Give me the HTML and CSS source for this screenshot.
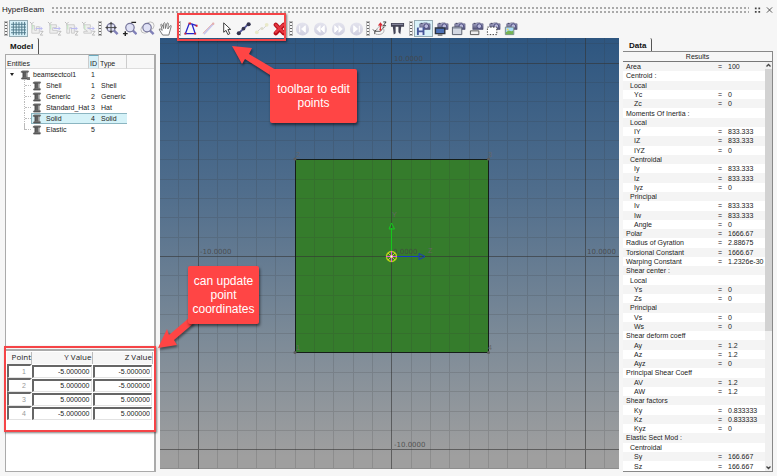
FILE: index.html
```
<!DOCTYPE html>
<html lang="en">
<head>
<meta charset="utf-8">
<meta name="viewport" content="width=device-width, initial-scale=1">
<title>HyperBeam</title>
<link rel="stylesheet" href="styles.css">
</head>
<body>
<svg class="defs" aria-hidden="true">
  <defs>
    <linearGradient id="ball" x1="0" y1="0" x2="0" y2="1"><stop offset="0" stop-color="#e4e4ee"/><stop offset="1" stop-color="#cfcfdf"/></linearGradient>
    <linearGradient id="metal" x1="0" y1="0" x2="0" y2="1"><stop offset="0" stop-color="#b4b4d4"/><stop offset="1" stop-color="#4c4c70"/></linearGradient>
    <symbol id="beam" viewBox="0 0 12 12"><path d="M1 1.5 3 .5h7l1 1.5-2 1v5l2 1.5-1.500 1.500H2L1 10l2-1.500V3.500z" fill="#777"/><path d="M4 3v6M6 3v6" stroke="#444" stroke-width="1"/><path d="M1 2.500h9M2 10.500h8" stroke="#444"/><path d="M8 3v5" stroke="#aaa"/></symbol>
    <symbol id="camera" viewBox="0 0 16 16"><path d="M4 3h3l1-1h4l1 1h2v6H4z" fill="url(#metal)" stroke="#4b4b70" stroke-width=".6"/><circle cx="11" cy="5.500" r="2.500" fill="#b9b9dc" stroke="#47477a"/><path d="M5 2.500h2" stroke="#39395a"/></symbol>
    <symbol id="lens" viewBox="0 0 16 16"><path d="m10.500 10 4 4" stroke="#8080b8" stroke-width="2.500"/><circle cx="7.500" cy="7" r="4.500" fill="#dfe1f5" stroke="#77779c" stroke-width="1.300"/></symbol>
  </defs>
</svg>
<header class="titlebar">
  <h1>HyperBeam</h1>
  <span class="dots"></span>
  <button class="win" aria-label="Undock"><svg viewBox="0 0 8 8"><path d="M1 1h2v2H1zM5 1h2v2H5zM1 5h2v2H1zM5 5h2v2H5z" fill="#444"/></svg></button>
  <button class="win" aria-label="Close"><svg viewBox="0 0 8 8"><path d="m1 1 6 6M7 1 1 7" stroke="#444"/></svg></button>
</header>

<nav class="toolbar" aria-label="Tools">
  <span class="grip"></span>
  <div class="group views">
    <button class="on" aria-label="Grid"><svg viewBox="0 0 16 16"><path d="M0 3.500h16M0 6.500h16M0 9.500h16M0 12.500h16M2.500 1v14M5.500 1v14M8.500 1v14M11.500 1v14M14.500 1v14" stroke="#4d7888" stroke-width="1"/></svg></button>
    <button aria-label="Orientation 1"><svg viewBox="0 0 16 16" fill="none"><path d="m1 1 2 2 2-2M3 3v2" stroke="#bbb"/><path d="M3 5v8h8V6H8v4H6V5z" fill="#eee" stroke="#ccc"/><path d="M7 8h7m-2-2 2 2-2 2" stroke="#b7b7f0"/><path d="M4 9V4" stroke="#bde6bd"/><path d="M12 11h3l-3 4h3" stroke="#bbb"/></svg></button>
    <button aria-label="Orientation 2"><svg viewBox="0 0 16 16" fill="none"><path d="m1 1 2 2 2-2M3 3v2" stroke="#bbb"/><path d="M3 4h7v3H6v3h5v3H3z" fill="#eee" stroke="#ccc"/><path d="M7 8h7m-2-2 2 2-2 2" stroke="#b7b7f0"/><path d="M4 9V4" stroke="#bde6bd"/><path d="M12 11h3l-3 4h3" stroke="#bbb"/></svg></button>
    <button aria-label="Orientation 3"><svg viewBox="0 0 16 16" fill="none"><path d="m1 1 2 2 2-2M3 3v2" stroke="#bbb"/><path d="M3 4h8v9H8V7H6v6H3z" fill="#eee" stroke="#ccc"/><path d="M7 8h7m-2-2 2 2-2 2" stroke="#b7b7f0"/><path d="M4 9V4" stroke="#bde6bd"/><path d="M12 11h3l-3 4h3" stroke="#bbb"/></svg></button>
    <button aria-label="Orientation 4"><svg viewBox="0 0 16 16" fill="none"><path d="m1 1 2 2 2-2M3 3v2" stroke="#bbb"/><path d="M3 4h7v3H7l4 3v3H3v-2h4L3 8z" fill="#eee" stroke="#ccc"/><path d="M7 8h7m-2-2 2 2-2 2" stroke="#b7b7f0"/><path d="M4 9V4" stroke="#bde6bd"/><path d="M12 11h3l-3 4h3" stroke="#bbb"/></svg></button>
  </div>
  <span class="grip"></span>
  <div class="group zooms">
    <button aria-label="Fit"><svg viewBox="0 0 16 16"><use href="#lens"/><path d="M7.500 1v12M1.500 7h12" stroke="#444" stroke-width="1"/><path d="m7.500 1.500-2 2h4zm0 11-2-2h4zM2 7l2-2v4zm11 0-2-2v4z" fill="#444"/></svg></button>
    <button aria-label="Zoom in or out"><svg viewBox="0 0 16 16"><use href="#lens" x="1"/><path d="M10 1.500h5M1 13.500h5M3.500 11v5" stroke="#222" stroke-width="1.500"/></svg></button>
    <button aria-label="Zoom area"><svg viewBox="0 0 16 16"><circle cx="5" cy="9" r="4" fill="none" stroke="#bbb"/><circle cx="11" cy="5" r="4" fill="none" stroke="#bbb"/><use href="#lens"/></svg></button>
    <button aria-label="Pan"><svg viewBox="0 0 16 16"><path d="M5 15 1.500 9.500q-.5-1.500 1-1L4.500 10 3 4q.5-1.500 1.500 0l1.500 4L6 2.500q.8-1.500 1.600 0L8 8l1.500-5.500q1.200-1.200 1.500.3L10.500 8.500 13 5q1.500-.5 1 1L11.500 15z" fill="#fff" stroke="#666" stroke-width=".9"/></svg></button>
  </div>
  <span class="grip"></span>
  <div class="group edit">
    <button aria-label="Create section"><svg viewBox="0 0 16 16"><path d="M2.500 13.500 6.500 3h3l3.500 10.500zM9 3l5.500 2" fill="none" stroke="#2424cc" stroke-width="1.400"/><path d="M1.500 12.500h2v2h-2zM12 12.500h2v2h-2zM6 1.500h2.500v2H6zM13.500 4h2v2h-2z" fill="#d32430"/></svg></button>
    <button aria-label="Draw line"><svg viewBox="0 0 16 16"><path d="m3 14 10-11" stroke="#c7c7ec" stroke-width="2"/><path d="m2 13 11-11" stroke="#e4b2b2"/><circle cx="13" cy="3" r="1.300" fill="#e4b0b0"/></svg></button>
    <button aria-label="Select"><svg viewBox="0 0 16 16"><path d="M5 2v10l2.500-2 2 4.500 2-1L9.500 9h3z" fill="#fff" stroke="#333" stroke-width="1"/></svg></button>
    <button aria-label="Add point"><svg viewBox="0 0 16 16"><path d="m3 13 10.500-10" stroke="#55579a" stroke-width="2"/><circle cx="3" cy="13" r="2.200" fill="#33344e"/><circle cx="8" cy="8" r="2" fill="#33344e"/><circle cx="13.500" cy="3.500" r="2.200" fill="#33344e"/></svg></button>
    <button aria-label="Merge points"><svg viewBox="0 0 16 16"><path d="m3 12 4-4h3l4-4" fill="none" stroke="#ccc"/><circle cx="3" cy="12" r="2" fill="#e9e9c8"/><circle cx="8.500" cy="8" r="1.700" fill="#dcdccc"/><circle cx="13.500" cy="4" r="2" fill="#e9e9c8"/></svg></button>
    <button aria-label="Delete"><svg viewBox="0 0 16 16"><path d="m4 4 8.500 9M12.500 4 4 13" stroke="#b60d18" stroke-width="4.500" stroke-linecap="round"/><path d="m4 4 8 8M12 4 4 12" stroke="#e53640" stroke-width="2.500" stroke-linecap="round"/></svg></button>
  </div>
  <span class="grip"></span>
  <div class="group steps">
    <button aria-label="First"><svg viewBox="0 0 16 16"><circle cx="8" cy="8.500" r="7" fill="url(#ball)"/><path d="M5 5v7M11 5l-4 3.500 4 3.500z" fill="#fff" stroke="#fff"/></svg></button>
    <button aria-label="Previous"><svg viewBox="0 0 16 16"><circle cx="8" cy="8.500" r="7" fill="url(#ball)"/><path d="M7.500 5 4 8.500 7.500 12zM12 5 8.500 8.500 12 12z" fill="#fff" stroke="#fff"/></svg></button>
    <button aria-label="Next"><svg viewBox="0 0 16 16"><circle cx="8" cy="8.500" r="7" fill="url(#ball)"/><path d="M4 5l3.500 3.500L4 12zM8.500 5 12 8.500 8.500 12z" fill="#fff" stroke="#fff"/></svg></button>
    <button aria-label="Last"><svg viewBox="0 0 16 16"><circle cx="8" cy="8.500" r="7" fill="url(#ball)"/><path d="M11 5v7M5 5l4 3.500L5 12z" fill="#fff" stroke="#fff"/></svg></button>
  </div>
  <span class="grip"></span>
  <div class="group measure">
    <button aria-label="Local axes"><svg viewBox="0 0 16 16" fill="none"><path d="m1 9 2 2 2-2M3 11v3M12 1h3l-3 4h3" stroke="#333"/><path d="M3 11h6l4-5" stroke="#555"/><path d="M4 14c8 2 11-4 7-7M5 10c0-4 6-6 9-3" stroke="#aaa"/><path d="M9 10V3M7 5l2-2.500L11 5" stroke="#d62b35" stroke-width="1.300"/><circle cx="9" cy="9" r="1" fill="#d22"/></svg></button>
    <button aria-label="Calipers"><svg viewBox="0 0 16 16"><path d="M1 2h14v4h-3l-1 8-2-2V6H6v7l-2 1.500L3 6H1z" fill="#444456"/><path d="M2 3.500h12" stroke="#999ab0"/></svg></button>
  </div>
  <span class="grip"></span>
  <div class="group capture">
    <button class="on" aria-label="Save image to file"><svg viewBox="0 0 16 16"><use href="#camera"/><path d="M1 7h8v8H1z" fill="#45579a"/><path d="M3 7h4v3H3zM3 12h4v3H3z" fill="#e8edff"/></svg></button>
    <button aria-label="Capture screen"><svg viewBox="0 0 16 16"><use href="#camera"/><path d="M1.500 7.500h10v6h-10z" fill="#4c70b4" stroke="#2d3440" stroke-width="1.500"/><path d="M4 15h5" stroke="#333"/></svg></button>
    <button aria-label="Capture window"><svg viewBox="0 0 16 16"><use href="#camera"/><path d="M1.500 6.500h10v8h-10z" fill="#d3d8e2" stroke="#555c69"/><path d="M2 7.500h9" stroke="#777f95"/></svg></button>
    <button aria-label="Capture panel"><svg viewBox="0 0 16 16"><use href="#camera"/><path d="M1.500 10.500h9v4h-9z" fill="#eee" stroke="#555"/></svg></button>
    <button aria-label="Capture area"><svg viewBox="0 0 16 16"><use href="#camera"/><path d="M1.500 6.500h10v8h-10z" fill="#fff" stroke="#333" stroke-dasharray="1.500 1.500"/></svg></button>
    <button aria-label="Capture graphics"><svg viewBox="0 0 16 16"><use href="#camera"/><path d="M2.500 6.500h9v8h-9z" fill="#a9dcfa" stroke="#788" /><path d="m3 12 3-2 3 1 2-1v4H3z" fill="#76b453"/><circle cx="5" cy="9" r="1" fill="#f5dc52"/></svg></button>
  </div>
</nav>

<main class="workspace">
  <section class="side">
    <div class="tab model">Model</div>
    <div class="panel tree">
      <table>
        <colgroup><col class="c-name"><col class="c-id"><col class="c-type"><col></colgroup>
        <thead><tr><th>Entities</th><th class="sorted">ID</th><th>Type</th><th></th></tr></thead>
        <tbody>
          <tr><td><div class="node root"><span class="caret"></span><svg><use href="#beam"/><circle cx="9" cy="9" r="2" fill="#777"/></svg><span class="label">beamsectcol1</span></div></td><td>1</td><td></td><td></td></tr>
          <tr><td><div class="node"><svg><use href="#beam"/></svg><span class="label">Shell</span></div></td><td>1</td><td>Shell</td><td></td></tr>
          <tr><td><div class="node"><svg><use href="#beam"/></svg><span class="label">Generic</span></div></td><td>2</td><td>Generic</td><td></td></tr>
          <tr><td><div class="node"><svg><use href="#beam"/></svg><span class="label">Standard_Hat</span></div></td><td>3</td><td>Hat</td><td></td></tr>
          <tr class="selected"><td><div class="node"><svg><use href="#beam"/></svg><span class="label">Solid</span></div></td><td>4</td><td>Solid</td><td></td></tr>
          <tr><td><div class="node last"><svg><use href="#beam"/></svg><span class="label">Elastic</span></div></td><td>5</td><td></td><td></td></tr>
        </tbody>
      </table>
    </div>
    <div class="panel points">
      <table>
        <colgroup><col class="c-point"><col><col></colgroup>
        <thead><tr><th>Point</th><th>Y Value</th><th>Z Value</th></tr></thead>
        <tbody>
          <tr><td class="num">1</td><td><input aria-label="Point 1 Y" value="-5.000000"></td><td><input aria-label="Point 1 Z" value="-5.000000"></td></tr>
          <tr><td class="num">2</td><td><input aria-label="Point 2 Y" value="5.000000"></td><td><input aria-label="Point 2 Z" value="-5.000000"></td></tr>
          <tr><td class="num">3</td><td><input aria-label="Point 3 Y" value="5.000000"></td><td><input aria-label="Point 3 Z" value="5.000000"></td></tr>
          <tr><td class="num">4</td><td><input aria-label="Point 4 Y" value="-5.000000"></td><td><input aria-label="Point 4 Z" value="5.000000"></td></tr>
        </tbody>
      </table>
    </div>
  </section>

  <section class="view" aria-label="Section view">
    <svg viewBox="0 0 459 431" preserveAspectRatio="xMidYMid slice">
      <path d="M135 121h193v193H135z" fill="#357c2c"/>
      <path class="minor" d="M18.500 0v431M57.500 0v431M77.500 0v431M96.500 0v431M115.500 0v431M135.500 0v431M154.500 0v431M173.500 0v431M193.500 0v431M212.500 0v431M251.500 0v431M270.500 0v431M289.500 0v431M309.500 0v431M328.500 0v431M347.500 0v431M367.500 0v431M386.500 0v431M405.500 0v431M444.500 0v431M0 5.500h459M0 44.500h459M0 63.500h459M0 83.500h459M0 102.500h459M0 121.500h459M0 141.500h459M0 160.500h459M0 179.500h459M0 199.500h459M0 237.500h459M0 257.500h459M0 276.500h459M0 295.500h459M0 314.500h459M0 334.500h459M0 353.500h459M0 373.500h459M0 392.500h459M0 430.500h459"/>
      <path class="major" d="M38.500 0v431M231.500 0v431M425.500 0v431M0 25.500h459M0 218.500h459M0 411.500h459"/>
      <path d="M135.500 121.500h193v193h-193z" fill="none" stroke="#151d18"/>
      <g fill="#5b5b5b"><circle cx="135" cy="121" r="1.500"/><circle cx="328.500" cy="121" r="1.500"/><circle cx="135" cy="314.500" r="1.500"/><circle cx="328.500" cy="314.500" r="1.500"/></g>
      <g class="axis-text"><text x="234" y="23">10.0000</text><text x="234" y="409">-10.0000</text><text x="40" y="216">-10.0000</text><text x="427" y="216">10.0000</text><text x="233" y="216">0.0000</text></g>
      <g class="point-text"><text x="136" y="119">2</text><text x="328" y="119">3</text><text x="136" y="312">1</text><text x="328" y="312">4</text><text x="232" y="179">Y</text><text x="268" y="215">Z</text></g>
      <path d="M231.500 218V190m-2.500 1 2.500-6 3 6z" fill="none" stroke="#15c81c"/>
      <path d="M232 218.500h27m0-3 6 3-6 3z" fill="none" stroke="#1638c4"/>
      <circle cx="231.500" cy="218.500" r="5" fill="none" stroke="#b8d515" stroke-width="1.300"/>
      <path d="m228 215 7 7m0-7-7 7" stroke="#d4c72f"/><path d="M226 218.500h11M231.500 213v11" stroke="#e05bd4"/><circle cx="231.500" cy="218.500" r="1" fill="#fff"/>
    </svg>
  </section>

  <section class="data">
    <div class="tab">Data</div>
    <div class="results">
      <h2>Results</h2>
      <div class="list">
        <table>
          <tbody>
            <tr><td>Area</td><td>=</td><td>100</td></tr>
            <tr><td>Centroid :</td><td></td><td></td></tr>
            <tr class="l1"><td>Local</td><td></td><td></td></tr>
            <tr class="l2"><td>Yc</td><td>=</td><td>0</td></tr>
            <tr class="l2"><td>Zc</td><td>=</td><td>0</td></tr>
            <tr><td>Moments Of Inertia :</td><td></td><td></td></tr>
            <tr class="l1"><td>Local</td><td></td><td></td></tr>
            <tr class="l2"><td>IY</td><td>=</td><td>833.333</td></tr>
            <tr class="l2"><td>IZ</td><td>=</td><td>833.333</td></tr>
            <tr class="l2"><td>IYZ</td><td>=</td><td>0</td></tr>
            <tr class="l1"><td>Centroidal</td><td></td><td></td></tr>
            <tr class="l2"><td>Iy</td><td>=</td><td>833.333</td></tr>
            <tr class="l2"><td>Iz</td><td>=</td><td>833.333</td></tr>
            <tr class="l2"><td>Iyz</td><td>=</td><td>0</td></tr>
            <tr class="l1"><td>Principal</td><td></td><td></td></tr>
            <tr class="l2"><td>Iv</td><td>=</td><td>833.333</td></tr>
            <tr class="l2"><td>Iw</td><td>=</td><td>833.333</td></tr>
            <tr class="l2"><td>Angle</td><td>=</td><td>0</td></tr>
            <tr><td>Polar</td><td>=</td><td>1666.67</td></tr>
            <tr><td>Radius of Gyration</td><td>=</td><td>2.88675</td></tr>
            <tr><td>Torsional Constant</td><td>=</td><td>1666.67</td></tr>
            <tr><td>Warping Constant</td><td>=</td><td>1.2326e-30</td></tr>
            <tr><td>Shear center :</td><td></td><td></td></tr>
            <tr class="l1"><td>Local</td><td></td><td></td></tr>
            <tr class="l2"><td>Ys</td><td>=</td><td>0</td></tr>
            <tr class="l2"><td>Zs</td><td>=</td><td>0</td></tr>
            <tr class="l1"><td>Principal</td><td></td><td></td></tr>
            <tr class="l2"><td>Vs</td><td>=</td><td>0</td></tr>
            <tr class="l2"><td>Ws</td><td>=</td><td>0</td></tr>
            <tr><td>Shear deform coeff</td><td></td><td></td></tr>
            <tr class="l2"><td>Ay</td><td>=</td><td>1.2</td></tr>
            <tr class="l2"><td>Az</td><td>=</td><td>1.2</td></tr>
            <tr class="l2"><td>Ayz</td><td>=</td><td>0</td></tr>
            <tr><td>Principal Shear Coeff</td><td></td><td></td></tr>
            <tr class="l2"><td>AV</td><td>=</td><td>1.2</td></tr>
            <tr class="l2"><td>AW</td><td>=</td><td>1.2</td></tr>
            <tr><td>Shear factors</td><td></td><td></td></tr>
            <tr class="l2"><td>Ky</td><td>=</td><td>0.833333</td></tr>
            <tr class="l2"><td>Kz</td><td>=</td><td>0.833333</td></tr>
            <tr class="l2"><td>Kyz</td><td>=</td><td>0</td></tr>
            <tr><td>Elastic Sect Mod :</td><td></td><td></td></tr>
            <tr class="l1"><td>Centroidal</td><td></td><td></td></tr>
            <tr class="l2"><td>Sy</td><td>=</td><td>166.667</td></tr>
            <tr class="l2"><td>Sz</td><td>=</td><td>166.667</td></tr>
          </tbody>
        </table>
        <div class="scroll">
          <svg viewBox="0 0 7 7"><path d="m1.500 4.500 2-2 2 2" fill="none" stroke="#444" stroke-width="1.300"/></svg>
          <span class="thumb"></span>
          <svg viewBox="0 0 7 7"><path d="m1.500 2.500 2 2 2-2" fill="none" stroke="#444" stroke-width="1.300"/></svg>
        </div>
      </div>
    </div>
  </section>
</main>

<div class="notes">
  <svg width="777" height="476">
    <path d="m232 46 20 2-3 6 27 16-6 5-25-16-3 5z"/>
    <path d="m158 348 9-19 2 6 20-17 5 5-20 17 3 5z"/>
  </svg>
  <span class="frame frame-tools"></span>
  <span class="frame frame-points"></span>
  <p class="callout callout-tools">toolbar to edit points</p>
  <p class="callout callout-points">can update point coordinates</p>
</div>
</body>
</html>
```
FILE: styles.css
```
* { box-sizing: border-box; }

body {
  margin: 0;
  height: 100vh;
  display: flex;
  flex-direction: column;
  position: relative;
  overflow: hidden;
  background: #f6f6f6;
  color: #222;
  font: 7px/9px "Liberation Sans", sans-serif;
}

h1, h2, p { margin: 0; font-weight: normal; }
button { padding: 0; border: 0; background: none; font: inherit; }
table { border-collapse: separate; border-spacing: 0; width: 100%; table-layout: fixed; }
td, th { padding: 0; font-weight: normal; text-align: left; white-space: nowrap; }
.defs { position: absolute; width: 0; height: 0; }

.titlebar {
  display: flex;
  align-items: center;
  gap: 4px;
  height: 18px;
  padding: 2px 4px 0 2px;
}
h1 { font: 8px/12px "Liberation Sans", sans-serif; width: 45px; }
.dots {
  flex: 1;
  height: 8px;
  background: radial-gradient(circle at 2px 2px, #aaa 1px, transparent 1px) 0 0 / 4px 4px;
}
.win { width: 7px; height: 8px; margin-left: 1px; }
.win svg { display: block; width: 7px; height: 8px; }

.toolbar {
  display: flex;
  align-items: center;
  gap: 1px;
  height: 20px;
  padding-left: 4px;
}
.group { display: flex; }
.group button { flex: 1; height: 17px; display: grid; place-items: center; }
.group button.on { border: 1px solid #96abb3; background: #d8f1f9; }
.group svg { width: 15px; height: 15px; display: block; }
.views { width: 88px; }
.zooms { width: 73px; padding-right: 2px; }
.edit { width: 106px; }
.steps { width: 71px; }
.measure { width: 37px; padding-right: 2px; }
.capture { width: 105px; }
.grip {
  width: 4px;
  height: 15px;
  border: 1px solid #bbb;
  background: repeating-linear-gradient(#666 0 1px, #f6f6f6 1px 3px);
}

.workspace {
  flex: 1;
  min-height: 0;
  display: grid;
  grid-template-columns: 160px minmax(0, 1fr) 158px;
  padding-bottom: 4px;
}

.tab {
  align-self: flex-start;
  font: bold 8px/12px "Liberation Sans", sans-serif;
  color: #111;
  border-right: 1px solid #555;
  border-radius: 0 2px 0 0;
}

.side { display: flex; flex-direction: column; padding: 0 4px 0 5px; min-height: 0; }
.model { padding: 3px 5px 1px; height: 16px; }
.panel { background: #fff; border: 1px solid #aaa; border-right-width: 2px; }
.tree { flex: 1; min-height: 0; overflow: hidden; }
.points { height: 123px; margin-top: 2px; border-top-width: 2px; padding: 1px; }

.tree th {
  height: 14px;
  background: #f7f7f7;
  border-right: 1px solid #ccc;
  border-bottom: 1px solid #ddd;
  padding: 4px 0 0 1px;
}
.tree th:last-child { border-right: 0; }
.tree th.sorted { background: #d8f1f9; border-top: 1px solid #6ca9bd; padding-top: 3px; }
.c-name { width: 83px; }
.c-id { width: 10px; }
.c-type { width: 28px; }
.tree td { height: 11px; padding-left: 2px; }
.tree td:first-child { padding: 0; }
.node {
  display: flex;
  align-items: center;
  height: 11px;
  margin-left: 18px;
  border-left: 1px dotted #bbb;
  gap: 4px;
}
.node::before { content: ""; width: 6px; border-top: 1px dotted #bbb; margin-right: -3px; flex: none; }
.node svg { width: 10px; height: 10px; flex: none; }
.node.last { border-image: linear-gradient(#bbb 50%, transparent 50%) 1; }
.root { margin-left: 4px; border: 0; gap: 3px; }
.root::before { display: none; }
.caret { border: 2px solid transparent; border-top: 3px solid #222; border-bottom: 0; margin-right: 3px; }
.selected td:nth-child(n+2):nth-child(-n+3) { background: #d5f2f8; border: solid #8bb5c1; border-width: 1px 0; }
.selected td:nth-child(3) { border-right-width: 1px; }
.selected td:first-child { background: linear-gradient(90deg, #fff 25px, #d5f2f8 25px); }
.selected .label { flex: 1; }
.selected .node { background: linear-gradient(#8bb5c1, #8bb5c1) 7px 0 / 100% 1px no-repeat, linear-gradient(#8bb5c1, #8bb5c1) 7px 10px / 100% 1px no-repeat, linear-gradient(#8bb5c1, #8bb5c1) 6px 0 / 1px 100% no-repeat; }

.c-point { width: 25px; }
.points th {
  height: 12px;
  font: 8px/10px "Open Sans", sans-serif;
  text-align: right;
  vertical-align: top;
  border-right: 1px solid #bbb;
  background: #f6f6f6;
}
.points td { height: 14px; padding-right: 1px; }
.points input, .points .num {
  border: 1px solid #e2e2e2;
  border-top: 2px solid #666;
  border-left: 2px solid #666;
  text-align: right;
  background: #fff;
}
.points input {
  display: block;
  width: 100%;
  height: 13px;
  padding: 0 1px;
  font: inherit;
  color: #222;
  outline: 0;
}
.points .num { color: #999; padding-right: 4px; border-right: 2px solid #fff; }

.view {
  margin-bottom: 3px;
  min-height: 0;
  background: linear-gradient(#2e5680, #4f6d8c 35%, #7a8997 68%, #9f9f9f 97%);
}
.view svg { display: block; width: 100%; height: 100%; }
.minor { fill: none; stroke: #333; stroke-opacity: .17; shape-rendering: crispEdges; }
.major { fill: none; stroke: #333; stroke-opacity: .6; shape-rendering: crispEdges; }
.axis-text { font: 7px "DejaVu Sans", sans-serif; fill: #444; fill-opacity: .85; }
.point-text { font: 7px "Liberation Sans", sans-serif; fill: #666; }

.data { display: flex; flex-direction: column; padding: 0 4px 0 4px; min-height: 0; }
.data .tab { height: 13px; padding: 3px 5px 0 6px; line-height: 10px; }
.results {
  flex: 1;
  min-height: 0;
  display: flex;
  flex-direction: column;
  background: #fff;
  border: solid #888;
  border-width: 1px 1px 1px 0;
}
h2 {
  font: 7px/9px "Liberation Sans", sans-serif;
  text-align: center;
  background: #f6f6f6;
  border-bottom: 1px solid #777;
}
.list { flex: 1; min-height: 0; display: flex; overflow: hidden; }
.list table { flex: 1; height: 100%; }
.list tr:nth-child(odd) { background: #f4f4f4; }
.list td { line-height: 9px; padding-left: 3px; }
.list td:nth-child(1) { width: 92px; }
.list td:nth-child(2) { width: 11px; }
.list td:nth-child(3) { padding-left: 2px; }
.list .l1 td:first-child { padding-left: 7px; }
.list .l2 td:first-child { padding-left: 11px; }
.scroll { width: 7px; display: flex; flex-direction: column; background: #f0f0f0; }
.scroll svg { width: 7px; height: 7px; }
.thumb { height: 262px; background: #d2d2d2; margin-bottom: auto; }

.notes { position: absolute; inset: 0; pointer-events: none; }
.notes svg { position: absolute; top: 0; left: 0; fill: #ff4545; filter: drop-shadow(1px 2px 1px rgba(0, 0, 0, .45)); }
.frame { position: absolute; border: 2px solid #f54447; box-shadow: 1px 1px 2px rgba(0, 0, 0, .5); }
.frame-tools { left: 177px; top: 13px; width: 109px; height: 28px; }
.frame-points { left: 4px; top: 346px; width: 152px; height: 86px; }
.callout {
  position: absolute;
  display: grid;
  place-items: center;
  text-align: center;
  border-radius: 2px;
  background: #ff4545;
  color: #fff;
  font: 12px/14px "Liberation Sans", sans-serif;
  box-shadow: 1px 2px 3px rgba(0, 0, 0, .55);
}
.callout-tools { left: 270px; top: 69px; width: 87px; height: 54px; padding: 0 6px; }
.callout-points { left: 188px; top: 266px; width: 71px; height: 58px; padding: 0 2px; }
```
